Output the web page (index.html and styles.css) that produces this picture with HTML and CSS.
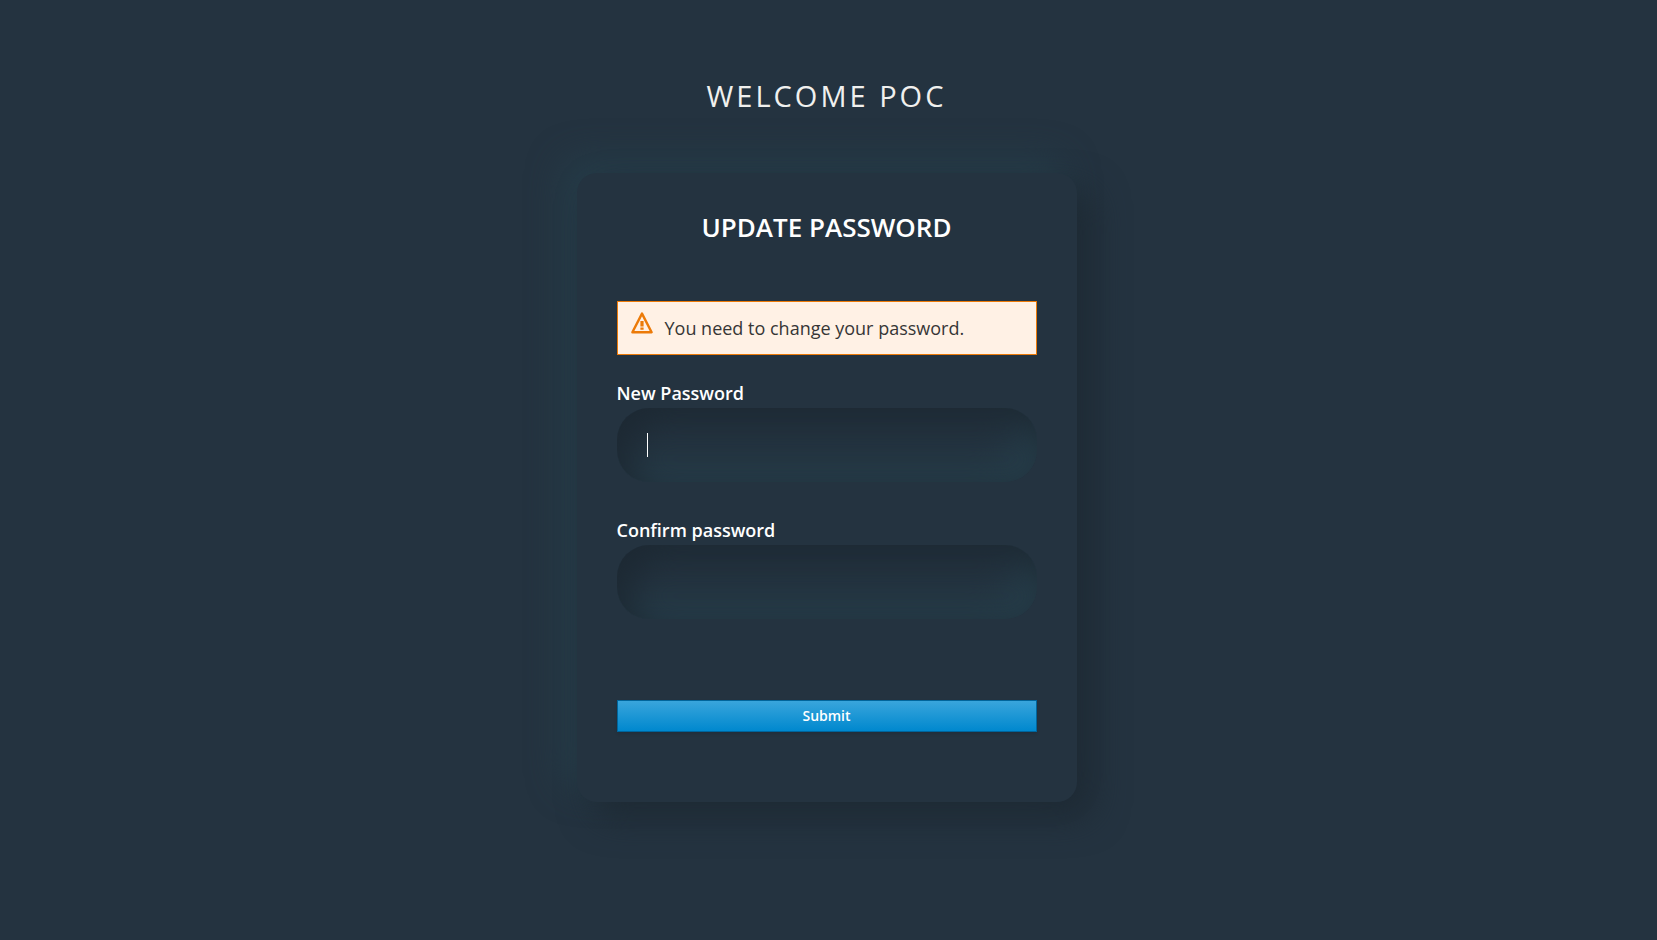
FILE: index.html
```html
<!DOCTYPE html>
<html lang="en">
<head>
<meta charset="utf-8">
<meta name="viewport" content="width=device-width, initial-scale=1">
<title>Update password</title>
<link rel="stylesheet" href="styles.css">
</head>
<body>
<div class="page">
  <header class="realm">Welcome POC</header>
  <main class="card">
    <h1 class="card-title">Update password</h1>
    <div class="alert" role="alert">
      <svg class="alert-icon" viewBox="0 0 22 22" aria-hidden="true">
        <path d="M11 1.6 L20.6 20.2 H1.4 Z" fill="none" stroke="#ec7a08" stroke-width="2.4" stroke-linejoin="round"/>
        <path d="M9.4 8.9h3.2v5.6h-3.2z M9.4 15.6h3.2v2.2h-3.2z" fill="#ec7a08"/>
      </svg>
      <span class="alert-text">You need to change your password.</span>
    </div>
    <form class="form">
      <div class="field">
        <label class="label" for="password-new">New Password</label>
        <input class="input" id="password-new" type="password" autocomplete="new-password" autofocus>
        <span class="caret" aria-hidden="true"></span>
      </div>
      <div class="field">
        <label class="label" for="password-confirm">Confirm password</label>
        <input class="input" id="password-confirm" type="password" autocomplete="new-password">
      </div>
      <button class="submit" type="submit">Submit</button>
    </form>
  </main>
</div>
</body>
</html>
```
FILE: styles.css
```css
* {
  box-sizing: border-box;
}

body {
  margin: 0;
  min-height: 100vh;
  background: #243340;
  color: #fff;
  font-family: "Open Sans", "Noto Sans", sans-serif;
  font-size: 18px;
}

.page {
  display: flex;
  flex-direction: column;
  align-items: center;
  padding: 76px 24px 40px 20px;
}

.realm {
  margin-bottom: 57px;
  font-size: 29px;
  line-height: 40px;
  font-weight: 400;
  letter-spacing: 3px;
  text-transform: uppercase;
  color: #f0f0ee;
}

.card {
  width: 100%;
  max-width: 500px;
  padding: 40px 40px 70px;
  border-radius: 20px;
  background: #243340;
  box-shadow: 16px 16px 34px #1e2a34, -14px -14px 34px #263d49;
}

.card-title {
  margin: 0 0 60px;
  font-size: 26px;
  line-height: 28px;
  font-weight: 600;
  text-align: center;
  text-transform: uppercase;
}

.alert {
  display: flex;
  align-items: flex-start;
  gap: 12px;
  min-height: 54px;
  margin-bottom: 24px;
  padding: 10px 13px;
  border: 1px solid #ec7a08;
  background: #fff1e5;
  color: #363636;
}

.alert-icon {
  flex: none;
  width: 22px;
  height: 22px;
}

.alert-text {
  line-height: 32px;
}

.form {
  display: flex;
  flex-direction: column;
}

.field {
  position: relative;
  display: flex;
  flex-direction: column;
  margin-bottom: 34px;
}

.label {
  margin-bottom: 1px;
  line-height: 28px;
  font-weight: 600;
}

.input {
  width: 100%;
  height: 74px;
  padding: 24px 30px;
  border: 0;
  border-radius: 32px;
  outline: 0;
  background: transparent;
  box-shadow: inset 14px 14px 34px #1d2933, inset -18px -18px 34px #263d49;
  color: #fff;
  caret-color: transparent;
  font: inherit;
}

.caret {
  display: none;
  position: absolute;
  left: 30px;
  bottom: 25px;
  width: 1px;
  height: 24px;
  background: #fff;
}

.input:focus + .caret {
  display: block;
}

.submit {
  height: 32px;
  margin-top: 47px;
  border: 1px solid #00659c;
  background: linear-gradient(#39a5dc, #0088ce);
  box-shadow: 0 2px 3px rgba(3, 3, 3, 0.1);
  color: #fff;
  font: 600 14px/20px "Open Sans", "Noto Sans", sans-serif;
}
```
